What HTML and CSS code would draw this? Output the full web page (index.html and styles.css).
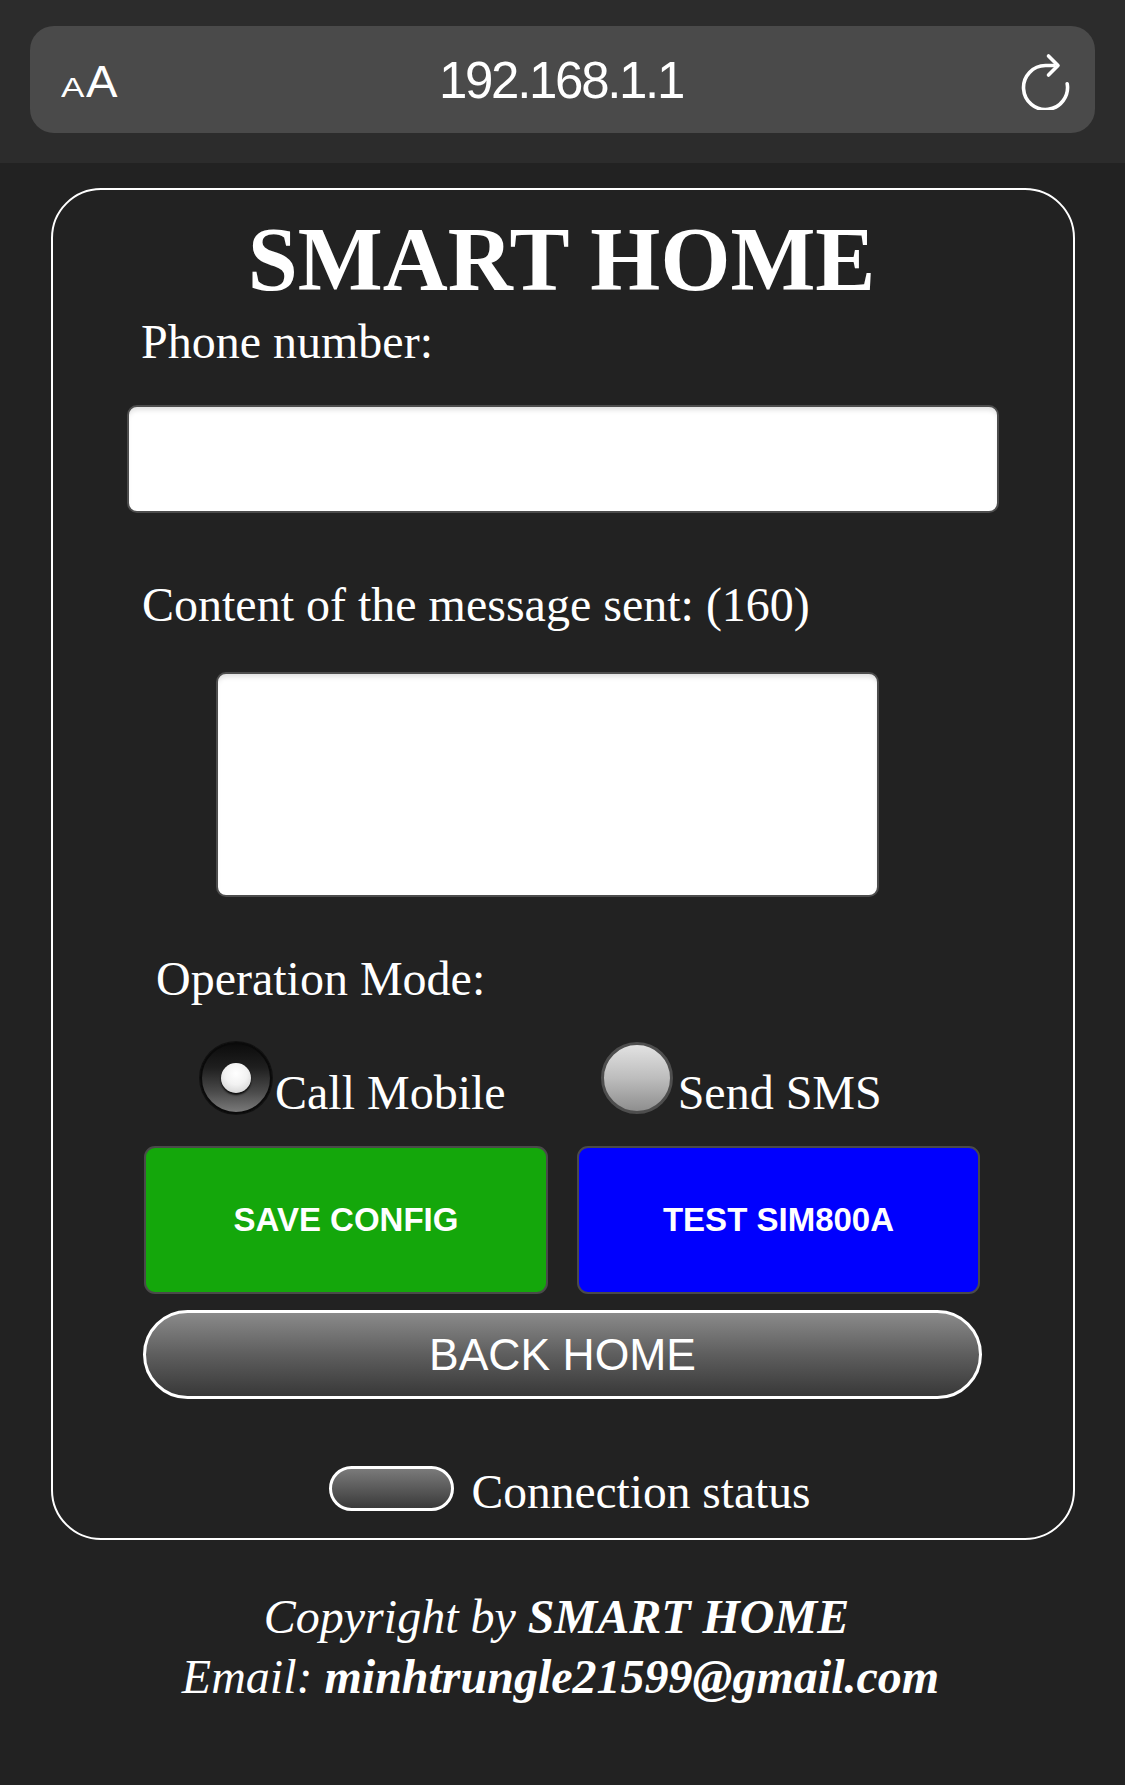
FILE: index.html
```html
<!DOCTYPE html>
<html lang="en">
<head>
<meta charset="utf-8">
<title>SMART HOME</title>
<link rel="stylesheet" href="styles.css">
</head>
<body>
<header class="topbar">
  <div class="urlpill">
    <div class="aa"><span class="a-small">A</span><span class="a-big">A</span></div>
    <div class="url">192.168.1.1</div>
    <div class="reload">
      <svg width="60" height="70" viewBox="1015 40 60 70" aria-hidden="true">
        <path d="M1067.2 83.7 A22 22 0 1 1 1045.5 65.5 L1054 65.5" fill="none" stroke="#fff" stroke-width="3.6" stroke-linecap="round" stroke-linejoin="round"/>
        <path d="M1048.5 56 L1058 65.5 L1048.5 75" fill="none" stroke="#fff" stroke-width="3.6" stroke-linecap="round" stroke-linejoin="round"/>
      </svg>
    </div>
  </div>
</header>

<main class="card">
  <h1 class="title">SMART HOME</h1>
  <div class="label label-phone">Phone number:</div>
  <input class="phone" type="text">
  <div class="label label-content">Content of the message sent: (160)</div>
  <textarea class="message"></textarea>
  <div class="label label-mode">Operation Mode:</div>
  <div class="modes">
    <div class="opt opt-call"><span class="radio on"></span>Call Mobile</div>
    <div class="opt opt-sms"><span class="radio"></span>Send SMS</div>
  </div>
  <div class="actions">
    <button class="btn btn-save">SAVE CONFIG</button>
    <button class="btn btn-test">TEST SIM800A</button>
  </div>
  <button class="back">BACK HOME</button>
  <div class="status"><span class="status-pill"></span>Connection status</div>
</main>

<footer class="footer">
  <div class="fline">Copyright by <b>SMART HOME</b></div>
  <div class="fline">Email: <b>minhtrungle21599@gmail.com</b></div>
</footer>
</body>
</html>
```

FILE: styles.css
```css
html, body {
  margin: 0;
  padding: 0;
  background: #222222;
  color: #ffffff;
}

body {
  width: 1125px;
  min-height: 1785px;
  font-family: "Liberation Serif", "Times New Roman", serif;
}

/* browser top bar */
.topbar {
  height: 163px;
  background: #2c2c2c;
  padding: 26px 30px 0 30px;
  box-sizing: border-box;
}

.urlpill {
  height: 107px;
  background: #4a4a4a;
  border-radius: 24px;
  display: grid;
  grid-template-columns: 1fr auto 1fr;
  align-items: center;
  padding: 0 20px 0 31px;
  font-family: "Liberation Sans", Arial, sans-serif;
}

.aa {
  display: flex;
  align-items: baseline;
  line-height: 1;
  padding-top: 4px;
}

.a-small {
  font-size: 27px;
  transform: scaleX(1.3);
  transform-origin: left bottom;
  margin-right: 7px;
}

.a-big {
  font-size: 45px;
  transform: scaleX(1.05);
  transform-origin: left bottom;
}

.url {
  font-size: 51px;
  line-height: 51px;
  letter-spacing: -2.3px;
  padding-top: 2px;
  margin-right: 14px;
}

.reload {
  justify-self: end;
  height: 70px;
  margin-bottom: 9px;
}

.reload svg {
  display: block;
}

/* card */
.card {
  width: 1024px;
  box-sizing: border-box;
  margin: 25px 0 0 51px;
  border: 2px solid #ffffff;
  border-radius: 50px;
  padding: 20px 0 18px 0;
}

.title {
  margin: 0;
  text-align: center;
  font-size: 90px;
  line-height: 100px;
  font-weight: bold;
  padding-right: 3px;
}

.label {
  font-size: 48px;
  line-height: 56px;
}

.label-phone {
  margin-top: 4px;
  padding-left: 88px;
}

.phone {
  display: block;
  box-sizing: border-box;
  width: 872px;
  height: 108px;
  margin: 35px 0 0 74px;
  border: 2px solid #4d4d4d;
  border-radius: 10px;
  background: #ffffff;
  box-shadow: inset 0 5px 5px -2px rgba(0, 0, 0, 0.12);
  outline: none;
  padding: 0;
}

.label-content {
  margin-top: 64px;
  padding-left: 89px;
}

.message {
  display: block;
  box-sizing: border-box;
  width: 663px;
  height: 225px;
  margin: 39px 0 0 163px;
  border: 2px solid #4d4d4d;
  border-radius: 10px;
  background: #ffffff;
  box-shadow: inset 0 5px 5px -2px rgba(0, 0, 0, 0.12);
  resize: none;
  outline: none;
  padding: 0;
}

.label-mode {
  margin-top: 54px;
  padding-left: 103px;
}

/* radios */
.modes {
  margin-top: 33px;
  height: 74px;
  display: flex;
  gap: 95px;
  padding-left: 147px;
  font-size: 48px;
  line-height: 56px;
}

.opt {
  white-space: nowrap;
  height: 74px;
  padding-top: 25px;
  box-sizing: border-box;
}

.radio {
  display: inline-block;
  position: relative;
  width: 72px;
  height: 72px;
  box-sizing: border-box;
  border-radius: 50%;
  vertical-align: -5px;
  margin-top: -25px;
}

.opt-call .radio {
  margin-right: 3px;
}

.opt-sms .radio {
  margin-right: 5px;
}

.radio.on {
  border: 2px solid #0a0a0a;
  background: linear-gradient(180deg, #0c0c0c 0%, #1f1f1f 35%, #4a4a4a 70%, #7a7a7a 100%);
  box-shadow: 0 0 0 1px rgba(0, 0, 0, 0.5);
}

.radio.on::after {
  content: "";
  position: absolute;
  left: 50%;
  top: 50%;
  width: 30px;
  height: 30px;
  margin: -15px 0 0 -15px;
  border-radius: 50%;
  background: radial-gradient(circle at 50% 35%, #ffffff 0%, #f2f2f2 45%, #c8c8c8 100%);
  box-shadow: 0 2px 2px rgba(0, 0, 0, 0.85);
}

.radio:not(.on) {
  border: 3px solid #4e4e4e;
  background: linear-gradient(180deg, #e2e2e2 0%, #bdbdbd 50%, #8e8e8e 100%);
}

/* buttons */
.actions {
  margin-top: 32px;
  display: flex;
  gap: 29px;
  padding-left: 91px;
}

.btn {
  width: 404px;
  height: 148px;
  box-sizing: border-box;
  border: 2px solid #4a4a4a;
  border-radius: 11px;
  color: #ffffff;
  font-family: "Liberation Sans", Arial, sans-serif;
  font-weight: bold;
  font-size: 33px;
  padding: 0;
}

.btn-save {
  background: #14a70b;
}

.btn-test {
  background: #0000fe;
  width: 403px;
}

.back {
  display: block;
  margin: 16px 0 0 90px;
  width: 839px;
  height: 89px;
  box-sizing: border-box;
  border: 3px solid #ffffff;
  border-radius: 45px;
  background: linear-gradient(180deg, #8a8a8a 0%, #5e5e5e 50%, #383838 100%);
  color: #ffffff;
  font-family: "Liberation Sans", Arial, sans-serif;
  font-size: 44.5px;
  padding: 0;
}

/* status */
.status {
  margin-top: 65px;
  height: 56px;
  font-size: 47.5px;
  line-height: 56px;
  text-align: center;
  padding-left: 14px;
  white-space: nowrap;
}

.status-pill {
  display: inline-block;
  width: 125px;
  height: 45px;
  box-sizing: border-box;
  border: 3px solid #ffffff;
  border-radius: 23px;
  background: linear-gradient(180deg, #7a7a7a 0%, #5a5a5a 50%, #3a3a3a 100%);
  vertical-align: -3px;
  margin-right: 17px;
}

/* footer */
.footer {
  margin-top: 47px;
  text-align: center;
  font-style: italic;
  font-size: 48px;
  line-height: 60px;
}

.fline b {
  font-weight: bold;
}

.fline:first-child {
  padding-right: 12px;
}

.fline:last-child {
  padding-right: 4px;
}
```
